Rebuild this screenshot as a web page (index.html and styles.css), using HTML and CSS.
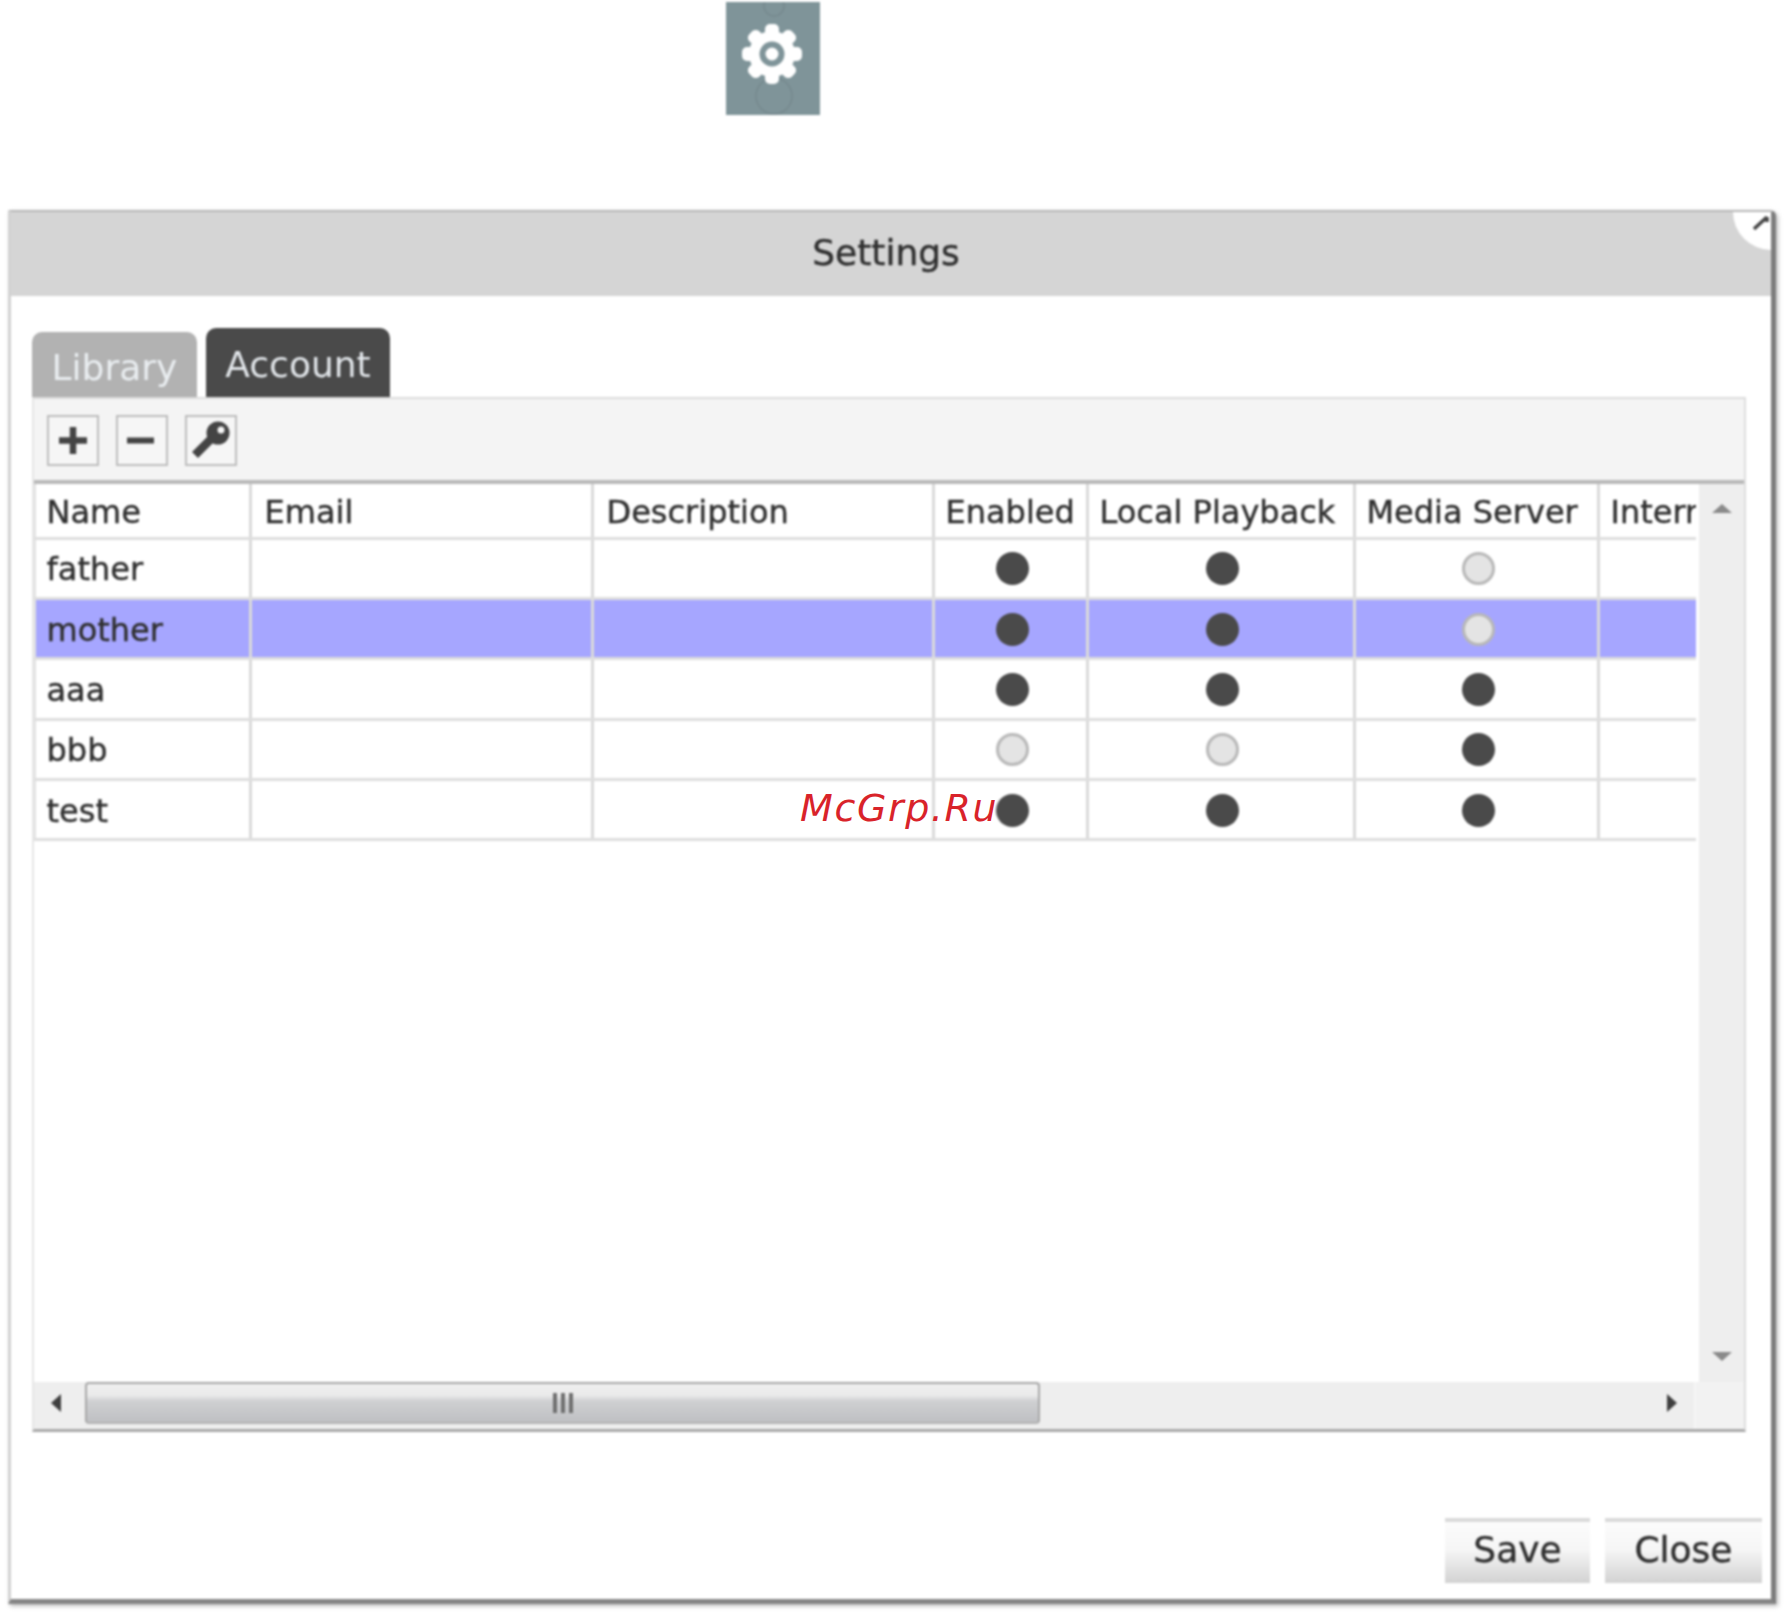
FILE: index.html
```html
<!DOCTYPE html>
<html lang="en">
<head>
<meta charset="utf-8">
<title>Settings</title>
<link rel="stylesheet" href="styles.css">
</head>
<body>
<div class="gear-tile">
  <svg class="gear" viewBox="0 0 94 113" aria-hidden="true">
    <circle class="ghost" cx="48" cy="4" r="10"/>
    <circle class="ghost" cx="48" cy="94" r="18"/>
    <g fill="#fff">
      <circle cx="46" cy="52" r="23"/>
      <rect x="39" y="22" width="14" height="60" rx="5"/>
      <rect x="39" y="22" width="14" height="60" rx="5" transform="rotate(45 46 52)"/>
      <rect x="39" y="22" width="14" height="60" rx="5" transform="rotate(90 46 52)"/>
      <rect x="39" y="22" width="14" height="60" rx="5" transform="rotate(135 46 52)"/>
    </g>
    <circle cx="46" cy="52" r="9.5" fill="#fff" stroke="#7f9499" stroke-width="6"/>
  </svg>
</div>

<div class="dialog">
  <div class="corner"><svg viewBox="0 0 18 18" aria-hidden="true"><path d="M1 15 L14 3 M14 3 L14 8" fill="none" stroke="#444" stroke-width="3.5"/></svg></div>
  <header class="title">Settings</header>
  <div class="tabs">
    <div class="tab tab-off">Library</div>
    <div class="tab tab-on">Account</div>
  </div>
  <div class="panel">
    <div class="toolbar">
      <button class="tool"><svg viewBox="0 0 48 47" aria-hidden="true"><path d="M24 10v27M10 23.500h28" stroke="#444" stroke-width="6.500" fill="none"/></svg></button>
      <button class="tool"><svg viewBox="0 0 48 47" aria-hidden="true"><path d="M9 23.500h27" stroke="#444" stroke-width="6" fill="none"/></svg></button>
      <button class="tool"><svg viewBox="0 0 48 47" aria-hidden="true"><path d="M8 38 L25 21" stroke="#444" stroke-width="8.500" fill="none"/><circle cx="31" cy="16" r="11.500" fill="#444"/><circle cx="34" cy="13" r="3.500" fill="#f6f6f6"/></svg></button>
    </div>
    <div class="grid-row">
      <div class="table-wrap">
        <table class="users">
          <colgroup>
            <col class="c-name"><col class="c-email"><col class="c-desc"><col class="c-en"><col class="c-local"><col class="c-media"><col class="c-inter">
          </colgroup>
          <thead>
            <tr><th>Name</th><th>Email</th><th>Description</th><th class="tight">Enabled</th><th class="tight">Local Playback</th><th class="tight">Media Server</th><th class="tight">Internet</th></tr>
          </thead>
          <tbody>
            <tr><td>father</td><td></td><td></td><td class="dot-cell"><span class="dot on"></span></td><td class="dot-cell"><span class="dot on"></span></td><td class="dot-cell"><span class="dot off"></span></td><td></td></tr>
            <tr class="selected"><td>mother</td><td></td><td></td><td class="dot-cell"><span class="dot on"></span></td><td class="dot-cell"><span class="dot on"></span></td><td class="dot-cell"><span class="dot off"></span></td><td></td></tr>
            <tr><td>aaa</td><td></td><td></td><td class="dot-cell"><span class="dot on"></span></td><td class="dot-cell"><span class="dot on"></span></td><td class="dot-cell"><span class="dot on"></span></td><td></td></tr>
            <tr><td>bbb</td><td></td><td></td><td class="dot-cell"><span class="dot off"></span></td><td class="dot-cell"><span class="dot off"></span></td><td class="dot-cell"><span class="dot on"></span></td><td></td></tr>
            <tr><td>test</td><td></td><td></td><td class="dot-cell"><span class="dot on"></span></td><td class="dot-cell"><span class="dot on"></span></td><td class="dot-cell"><span class="dot on"></span></td><td></td></tr>
          </tbody>
        </table>
      </div>
      <div class="vscroll">
        <span class="arrow-up"></span>
        <span class="arrow-down"></span>
      </div>
    </div>
    <div class="hscroll-row">
      <div class="hscroll">
        <div class="h-btn"><span class="arrow-left"></span></div>
        <div class="thumb"><span class="grip"></span><span class="grip"></span><span class="grip"></span></div>
        <div class="h-track"></div>
        <div class="h-btn h-btn-right"><span class="arrow-right"></span></div>
      </div>
      <div class="scroll-corner"></div>
    </div>
  </div>
  <footer class="actions">
    <button class="action save">Save</button>
    <button class="action close">Close</button>
  </footer>
</div>
<div class="watermark">McGrp.Ru</div>
</body>
</html>
```
FILE: styles.css
```css
* { box-sizing: border-box; }
html, body { margin: 0; padding: 0; background: #fff; }
body {
  position: relative;
  height: 1612px;
  overflow: hidden;
  font-family: "DejaVu Sans", Verdana, sans-serif;
  color: #2f2f2f;
  padding-top: 2px;
}
.gear-tile {
  width: 94px;
  height: 113px;
  margin-left: 726px;
  background: #7f9499;
  filter: blur(0.8px);
}
.gear { display: block; width: 94px; height: 113px; }
.ghost { fill: none; stroke: #76898e; stroke-width: 1.5; }

.dialog {
  position: relative;
  margin: 95px 0 0 8px;
  width: 1768px;
  height: 1394px;
  display: flex;
  flex-direction: column;
  background: #fff;
  border-top: 2px solid #b8b8b8;
  border-left: 3px solid #d2d2d2;
  border-right: 5px solid #7d7d7d;
  border-bottom: 5px solid #858585;
  box-shadow: 2px 2px 4px #bbb;
  border-top-right-radius: 6px;
  filter: blur(0.9px);
}
.corner {
  position: absolute;
  top: 0;
  right: 0;
  width: 38px;
  height: 38px;
  background: #fff;
  border-bottom-left-radius: 38px;
}
.corner svg { position: absolute; right: 0; top: 2px; width: 18px; height: 18px; }
.title {
  height: 84px;
  flex: none;
  background: #d5d5d5;
  font-size: 36px;
  line-height: 82px;
  text-align: center;
  padding-right: 10px;
  -webkit-text-stroke: 0.4px #2f2f2f;
}
.tabs {
  display: flex;
  gap: 9px;
  height: 69px;
  flex: none;
  margin: 32px 0 0 21px;
}
.tab {
  border-radius: 10px 10px 0 0;
  font-size: 36px;
  text-align: center;
}
.tab-off {
  width: 165px;
  height: 69px;
  margin-top: 4px;
  background: #b2b2b2;
  color: #e9edf0;
  line-height: 72px;
}
.tab-on {
  width: 184px;
  height: 69px;
  background: #4a4a4a;
  color: #e2e6ea;
  line-height: 74px;
}
.panel {
  width: 1714px;
  margin-left: 21px;
  flex: none;
  display: flex;
  flex-direction: column;
  background: #fff;
  border-top: 2px solid #dcdcdc;
  border-right: 2px solid #dedede;
  border-left: 2px solid #e6e6e6;
  border-bottom: 3px solid #a9a9a9;
  height: 1035px;
}
.toolbar {
  height: 85px;
  flex: none;
  display: flex;
  gap: 17px;
  padding: 16px 0 0 13px;
  background: #f4f4f4;
  border-bottom: 4px solid #b9b9b9;
}
.tool {
  width: 52px;
  height: 51px;
  padding: 0;
  background: #f6f6f6;
  border: 2px solid #bdbdbd;
}
.tool svg { display: block; width: 48px; height: 47px; }

.grid-row { display: flex; height: 898px; flex: none; }
.table-wrap { width: 1662px; height: 898px; overflow: hidden; flex: none; }
.users {
  table-layout: fixed;
  width: 1700px;
  margin-left: -1.5px;
  border-collapse: collapse;
  font-size: 32px;
  -webkit-text-stroke: 0.4px #2f2f2f;
}
.c-name { width: 216px; }
.c-email { width: 342px; }
.c-desc { width: 341px; }
.c-en { width: 154px; }
.c-local { width: 267px; }
.c-media { width: 244px; }
.c-inter { width: 136px; }
.users th, .users td {
  border-right: 3px solid #dadada;
  border-bottom: 3px solid #dedede;
  padding: 2px 0 0 13px;
  text-align: left;
  font-weight: 400;
  white-space: nowrap;
  overflow: hidden;
  height: 60.4px;
}
.users th:first-child, .users td:first-child { border-left: 3px solid #e2e2e2; padding-left: 11px; }
.users thead th { height: 54px; padding-top: 3px; }
.users thead th.tight { padding-left: 11px; }
.users td.dot-cell { padding: 0 0 0 4px; text-align: center; }
.selected td { background: #a6a6ff; }
.dot {
  display: inline-block;
  width: 33px;
  height: 33px;
  margin-top: -3px;
  border-radius: 50%;
  vertical-align: middle;
}
.dot.on { background: #4a4a4a; }
.dot.off { background: #e4e4e4; border: 3px solid #b8b8b8; }

.vscroll {
  width: 46px;
  height: 898px;
  margin-left: 3px;
  background: #eeeeee;
  display: flex;
  flex-direction: column;
  justify-content: space-between;
  align-items: center;
  padding: 20px 0 21px;
}
.arrow-up {
  border-left: 10px solid transparent;
  border-right: 10px solid transparent;
  border-bottom: 9px solid #8a8a8a;
}
.arrow-down {
  border-left: 10px solid transparent;
  border-right: 10px solid transparent;
  border-top: 9px solid #8a8a8a;
}
.hscroll-row { display: flex; flex: 1; }
.hscroll { width: 1660px; display: flex; background: #eeeeee; padding-bottom: 5px; }
.scroll-corner { flex: 1; background: #f2f2f2; border-left: 2px solid #f6f6f6; }
.h-btn {
  width: 51px;
  flex: none;
  display: flex;
  align-items: center;
  justify-content: center;
  padding-right: 8px;
}
.h-btn-right { width: 40px; padding-right: 5px; }
.arrow-left {
  border-top: 9px solid transparent;
  border-bottom: 9px solid transparent;
  border-right: 10px solid #3f3f3f;
}
.arrow-right {
  border-top: 9px solid transparent;
  border-bottom: 9px solid transparent;
  border-left: 10px solid #3f3f3f;
}
.thumb {
  width: 955px;
  flex: none;
  display: flex;
  gap: 4px;
  justify-content: center;
  align-items: center;
  border: 2px solid #a8a8a8;
  border-bottom-color: #b4b4b4;
  border-radius: 4px;
  background: linear-gradient(#f0f0f0 0, #eaeaea 30%, #cfd0d2 45%, #bfc0c3 100%);
}
.grip { width: 4px; height: 20px; background: #6f6f6f; }
.h-track { flex: 1; }

.actions {
  display: flex;
  justify-content: flex-end;
  gap: 15px;
  padding: 86px 9px 0 0;
}
.action {
  height: 65px;
  padding: 0 0 7px;
  border: 0;
  border-top: 4px solid #dadada;
  background: linear-gradient(#fcfcfc 0, #f6f6f6 45%, #d2d2d2 100%);
  font-family: "DejaVu Sans", Verdana, sans-serif;
  font-size: 36px;
  color: #2f2f2f;
  -webkit-text-stroke: 0.4px #2f2f2f;
}
.save { width: 145px; }
.close { width: 157px; }

.watermark {
  position: absolute;
  left: 800px;
  top: 786px;
  font-family: "DejaVu Sans", sans-serif;
  font-style: italic;
  font-size: 38px;
  line-height: 44px;
  letter-spacing: 1.6px;
  color: #d9232a;
}
```
